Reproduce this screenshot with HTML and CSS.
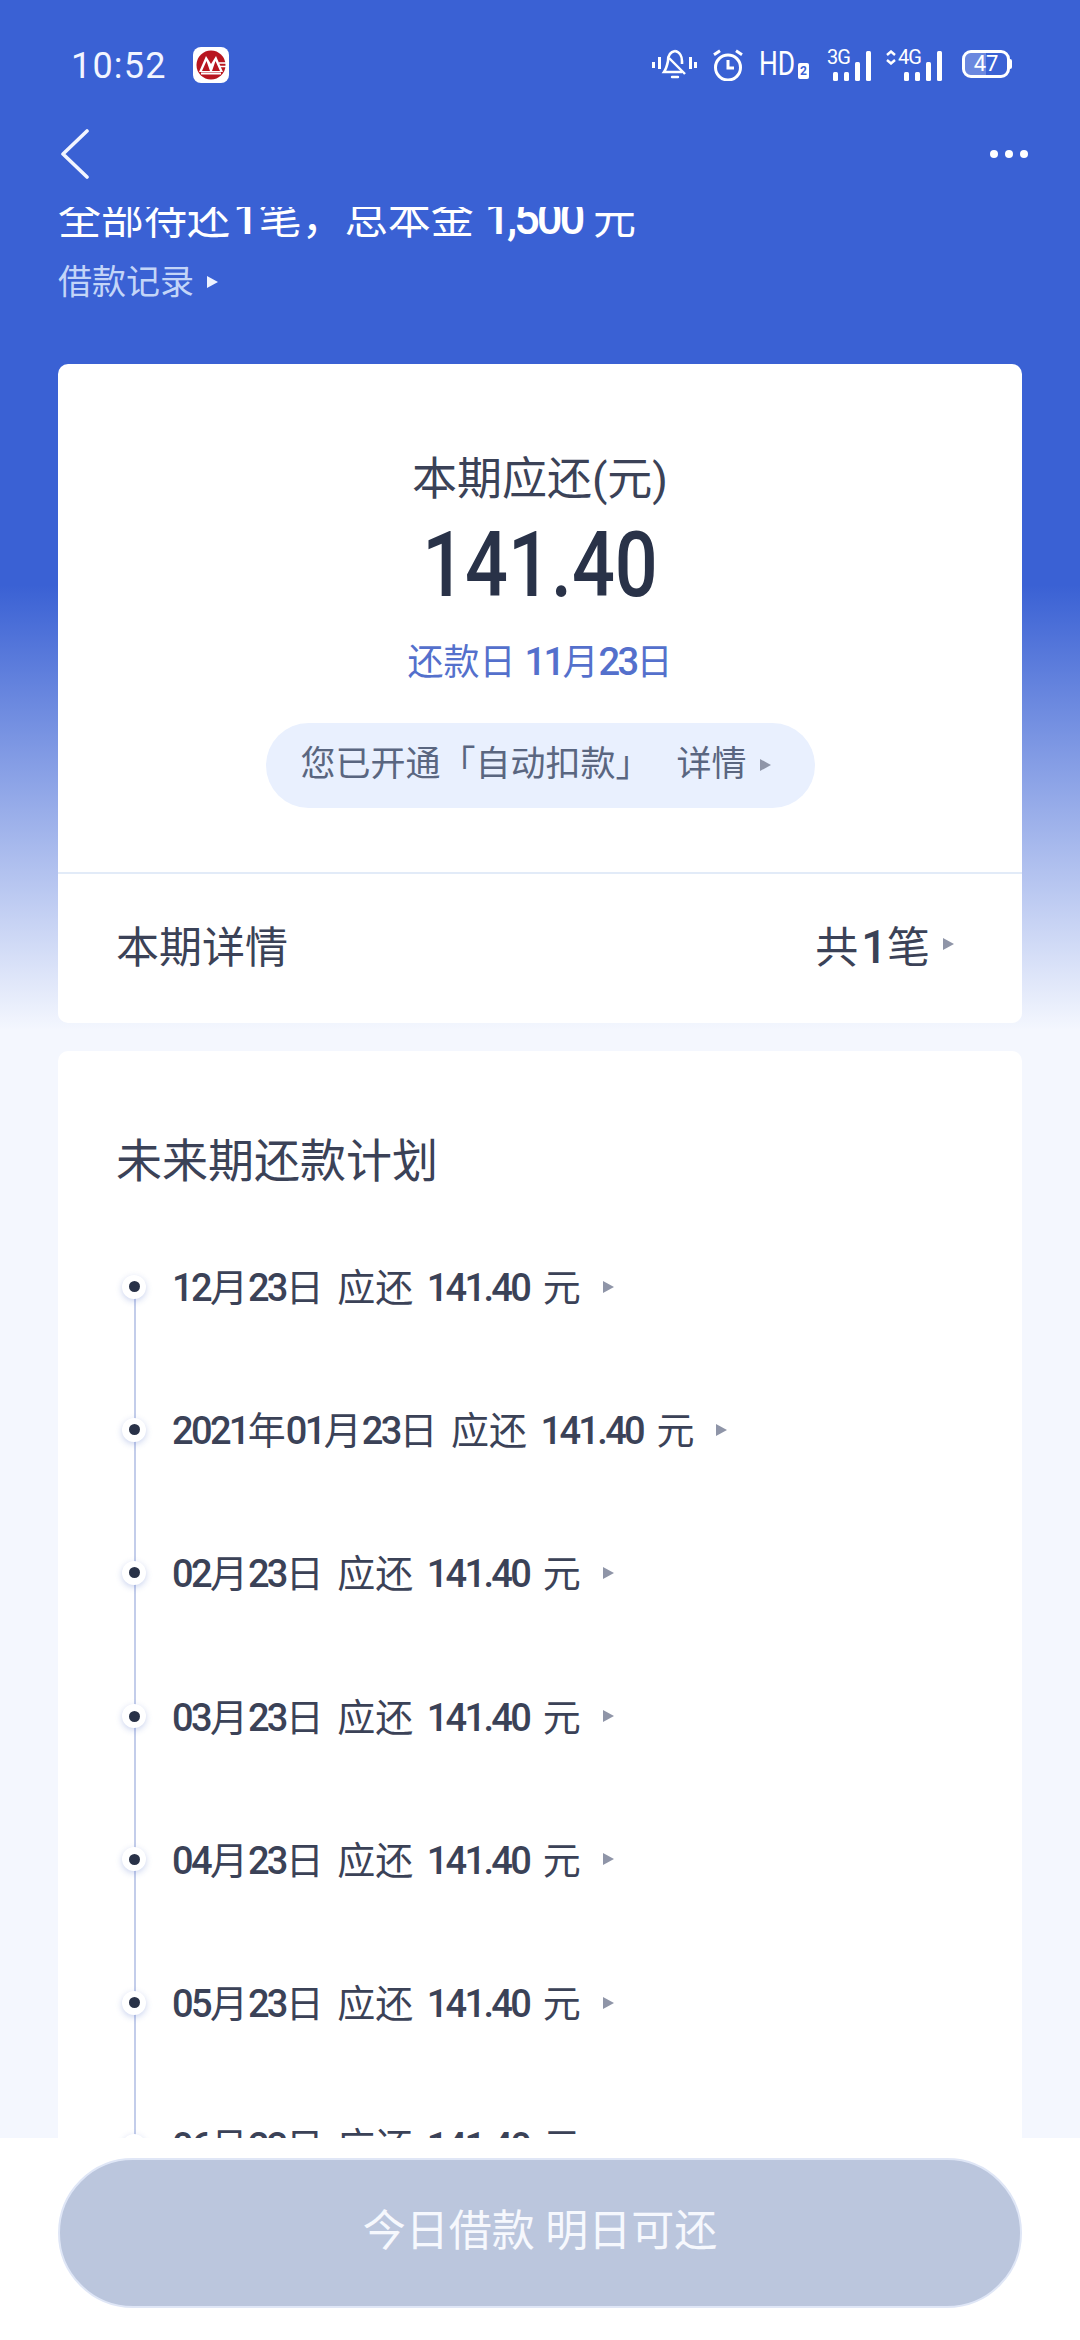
FILE: index.html
```html
<!DOCTYPE html>
<html lang="zh-CN">
<head>
  <meta charset="UTF-8">
  <meta name="viewport" content="width=device-width, initial-scale=1.0">
  <title>本期应还</title>
  <link rel="stylesheet" href="styles.css">
</head>
<body>
  <div class="screen">
    <div class="status-bar">
      <div class="status-left">
        <span class="time">10:52</span>
        <svg class="bank-logo" width="36" height="36" viewBox="0 0 36 36">
          <rect width="36" height="36" rx="8" fill="#fff"/>
          <circle cx="18" cy="18" r="14.5" fill="#b8151f"/>
          <path d="M6 25 L13 9 L18 17 L23 9 L30 25 Z" fill="#fff"/>
          <path d="M9 24 L13.5 14 L17 24 Z M19 24 L22.5 14 L27 24 Z" fill="#b8151f"/>
          <path d="M26 16 H33 M27 19.5 H33" stroke="#fff" stroke-width="1.5"/>
          <path d="M8 26.5 H28" stroke="#fff" stroke-width="2"/>
        </svg>
      </div>
      <div class="status-right">
        <svg width="46" height="32" viewBox="0 0 46 32" fill="none" stroke="#fff">
          <path d="M1 13 H4 V19 H1 Z M7 8 H10 V20 H7 Z M38 8 H41 V20 H38 Z M43 13 H46 V19 H43 Z" fill="#fff" stroke="none"/>
          <path d="M24 2 C18 3 17 8 17 12 C16 17 15 20 13 23 H31 M24 2 C29 3 31 8 31 12 L31 15" stroke-width="2.600"/>
          <path d="M18 9 L34 25" stroke-width="2.400"/>
          <path d="M21 28 H27" stroke-width="2.400" stroke-linecap="round"/>
        </svg>
        <svg class="clock-icon" width="32" height="32" viewBox="0 0 32 32" fill="none" stroke="#fff" stroke-width="3">
          <circle cx="16" cy="18.500" r="12.500"/>
          <path d="M16 11 V19 H22"/>
          <path d="M2 5.700 L8 1.700 M24 1.700 L30 5.700"/>
        </svg>
        <div class="hd-mark">
          <span class="hd-text">HD</span>
          <span class="hd-badge">2</span>
        </div>
        <div class="signal">
          <span class="net-label">3G</span>
          <div class="bars">
            <i class="bar bar-low"></i><i class="bar bar-low"></i><i class="bar bar-mid"></i><i class="bar bar-full"></i>
          </div>
        </div>
        <div class="signal signal-data">
          <svg class="data-arrows" width="10" height="15" viewBox="0 0 10 15" fill="none" stroke="#fff" stroke-width="2.400">
            <path d="M1 5 L5 1.500 L9 5 M1 10 L5 13.500 L9 10"/>
          </svg>
          <span class="net-label">4G</span>
          <div class="bars">
            <i class="bar bar-low"></i><i class="bar bar-low"></i><i class="bar bar-mid"></i><i class="bar bar-full"></i>
          </div>
        </div>
        <div class="battery">
          <div class="battery-body">
            <i class="battery-fill"></i>
            <span class="battery-level">47</span>
          </div>
          <i class="battery-nub"></i>
        </div>
      </div>
    </div>

    <div class="nav-bar">
      <svg width="30" height="50" viewBox="0 0 30 50" fill="none" stroke="#f2f5ff" stroke-width="3.600" stroke-linecap="round" stroke-linejoin="round">
        <path d="M27 2 L3 25 L27 48"/>
      </svg>
      <div class="more">
        <span></span><span></span><span></span>
      </div>
    </div>

    <div class="scroll">
      <div class="summary">
        <div class="summary-title">全部待还<b class="num num-gap">1</b>笔，总本金 <b class="num">1,500</b> 元</div>
        <div class="summary-link">借款记录 <i class="arrow arrow-light"></i></div>
      </div>

      <div class="card due-card">
        <div class="due-label">本期应还(元)</div>
        <div class="due-amount">141.40</div>
        <div class="due-date">还款日 <b class="num">11</b>月<b class="num">23</b>日</div>
        <div class="auto-pay">
          <span>您已开通「自动扣款」</span>
          <span class="auto-detail">详情</span>
          <i class="arrow"></i>
        </div>
        <div class="detail-row">
          <span>本期详情</span>
          <span class="detail-count">
            <span>共<b class="num num-gap">1</b>笔</span>
            <i class="arrow"></i>
          </span>
        </div>
      </div>

      <div class="card plan-card">
        <div class="plan-title">未来期还款计划</div>
        <ul class="plan-list">
          <li class="plan-item"><i class="plan-dot"></i><span><b class="num">12</b>月<b class="num">23</b>日 应还 <b class="num">141.40</b> 元</span><i class="arrow"></i></li>
          <li class="plan-item"><i class="plan-dot"></i><span><b class="num">2021</b>年<b class="num">01</b>月<b class="num">23</b>日 应还 <b class="num">141.40</b> 元</span><i class="arrow"></i></li>
          <li class="plan-item"><i class="plan-dot"></i><span><b class="num">02</b>月<b class="num">23</b>日 应还 <b class="num">141.40</b> 元</span><i class="arrow"></i></li>
          <li class="plan-item"><i class="plan-dot"></i><span><b class="num">03</b>月<b class="num">23</b>日 应还 <b class="num">141.40</b> 元</span><i class="arrow"></i></li>
          <li class="plan-item"><i class="plan-dot"></i><span><b class="num">04</b>月<b class="num">23</b>日 应还 <b class="num">141.40</b> 元</span><i class="arrow"></i></li>
          <li class="plan-item"><i class="plan-dot"></i><span><b class="num">05</b>月<b class="num">23</b>日 应还 <b class="num">141.40</b> 元</span><i class="arrow"></i></li>
          <li class="plan-item"><i class="plan-dot"></i><span><b class="num">06</b>月<b class="num">23</b>日 应还 <b class="num">141.40</b> 元</span><i class="arrow"></i></li>
        </ul>
      </div>
    </div>

    <div class="footer">
      <button class="borrow-button"><span>今日借款 明日可还</span></button>
    </div>
  </div>
</body>
</html>
```

FILE: styles.css
```css
* {
  box-sizing: border-box;
}
body {
  margin: 0;
  font-family: Roboto, "Noto Sans CJK SC", sans-serif;
  color: #3b4257;
}
.screen {
  display: flex;
  flex-direction: column;
  width: 1080px;
  height: 2340px;
  overflow: hidden;
  background: linear-gradient(#3a61d4 0, #3a61d4 585px, #f4f7fe 1030px);
}
.num {
  font-size: 1.06em;
  font-weight: 500;
  line-height: 1;
  letter-spacing: -0.07em;
}
.num-gap {
  margin: 0 3px;
}

/* status bar */
.status-bar {
  display: flex;
  justify-content: space-between;
  align-items: center;
  flex: none;
  height: 120px;
  padding: 12px 68px 0 71px;
  color: #fff;
}
.status-left {
  display: flex;
  align-items: center;
  gap: 26px;
}
.time {
  font-size: 36px;
  letter-spacing: 1.200px;
  color: #f2f5ff;
}
.bank-logo {
  margin-top: -2px;
}
.status-right {
  display: flex;
  align-items: flex-start;
  height: 32px;
  margin-top: -2px;
}
.clock-icon {
  margin-left: 15px;
}
.hd-mark {
  display: flex;
  align-items: flex-end;
  margin-left: 15px;
  height: 30px;
}
.hd-text {
  display: block;
  width: 36px;
  font-size: 33px;
  line-height: 30px;
  transform: scaleX(0.8);
  transform-origin: left;
}
.hd-badge {
  width: 11px;
  height: 16px;
  margin-left: 3px;
  background: #fff;
  border-radius: 2px;
  color: #3a61d4;
  font-size: 12px;
  font-weight: 700;
  line-height: 17px;
  text-align: center;
}
.signal {
  position: relative;
  width: 44px;
  height: 32px;
  margin-left: 18px;
}
.signal-data {
  width: 56px;
  margin-left: 15px;
}
.net-label {
  position: absolute;
  top: -1px;
  left: 0;
  font-size: 20px;
  line-height: 18px;
  letter-spacing: -1px;
}
.signal-data .net-label {
  left: 12px;
}
.data-arrows {
  position: absolute;
  top: 1px;
  left: 0;
}
.bars {
  position: absolute;
  right: 0;
  bottom: 0;
  display: flex;
  align-items: flex-end;
  gap: 6px;
}
.bar {
  display: block;
  width: 5px;
  background: #fff;
  border-radius: 1.5px;
}
.bar-low {
  height: 9px;
}
.bar-mid {
  height: 19px;
}
.bar-full {
  height: 30px;
}
.battery {
  display: flex;
  align-items: center;
  height: 30px;
  margin-left: 20px;
}
.battery-body {
  position: relative;
  width: 48px;
  height: 28px;
  overflow: hidden;
  border: 3px solid #fff;
  border-radius: 9px;
}
.battery-fill {
  display: block;
  width: 21px;
  height: 100%;
  background: rgba(255, 255, 255, 0.25);
}
.battery-level {
  position: absolute;
  top: 0;
  left: 0;
  width: 100%;
  font-size: 22px;
  line-height: 22px;
  text-align: center;
}
.battery-nub {
  width: 2px;
  height: 10px;
  background: #fff;
  border-radius: 0 2px 2px 0;
}

/* nav */
.nav-bar {
  display: flex;
  justify-content: space-between;
  align-items: center;
  flex: none;
  height: 87px;
  padding: 0 52px 20px 60px;
}
.more {
  display: flex;
  gap: 7px;
}
.more span {
  width: 8px;
  height: 8px;
  background: #fff;
  border-radius: 50%;
}

/* content */
.scroll {
  flex: 1;
  min-height: 0;
  overflow: hidden;
  padding: 0 58px;
}
.summary {
  margin-top: -13px;
}
.summary-title {
  font-size: 43px;
  line-height: 50px;
  color: #fff;
  white-space: nowrap;
}
.summary-link {
  display: flex;
  align-items: center;
  gap: 13px;
  margin-top: 13px;
  font-size: 34px;
  line-height: 50px;
  color: #c3d5f8;
}
.arrow {
  display: inline-block;
  flex: none;
  width: 0;
  height: 0;
  border-left: 11px solid #8f95a8;
  border-top: 6px solid transparent;
  border-bottom: 6px solid transparent;
}
.arrow-light {
  border-left-color: #eef3ff;
}
.card {
  background: #fff;
  border-radius: 10px;
}
.due-card {
  display: flex;
  flex-direction: column;
  align-items: center;
  margin-top: 57px;
  padding-top: 86px;
}
.due-label {
  font-size: 45px;
  line-height: 60px;
}
.due-amount {
  margin-top: 5px;
  margin-bottom: -1px;
  font-size: 91px;
  font-weight: 500;
  line-height: 100px;
  color: #293248;
  transform: scaleX(0.83);
}
.due-date {
  margin-top: 24px;
  font-size: 36px;
  line-height: 50px;
  color: #5470cc;
}
.auto-pay {
  display: flex;
  align-items: center;
  width: 549px;
  height: 85px;
  margin-top: 35px;
  padding: 0 0 10px 35px;
  background: #e9f0fe;
  border-radius: 43px;
  font-size: 35px;
  color: #5a6680;
}
.auto-pay .arrow {
  margin-top: 8px;
}
.auto-detail {
  margin-left: 26px;
  margin-right: 13px;
}
.detail-row {
  display: flex;
  justify-content: space-between;
  align-items: center;
  align-self: stretch;
  height: 151px;
  margin-top: 64px;
  padding: 0 68px 10px 58px;
  border-top: 2px solid #e2ebf8;
  font-size: 43px;
}
.detail-count {
  display: flex;
  align-items: center;
  gap: 13px;
}
.plan-card {
  margin-top: 28px;
  padding: 78px 58px 40px;
}
.plan-title {
  font-size: 46px;
  line-height: 64px;
}
.plan-list {
  position: relative;
  margin: 22px 0 0;
  padding: 0;
  list-style: none;
}
.plan-list::before {
  content: "";
  position: absolute;
  top: 72px;
  bottom: 0;
  left: 18px;
  width: 2px;
  background: #c3cdea;
}
.plan-item {
  position: relative;
  display: flex;
  align-items: center;
  height: 143.2px;
  font-size: 38px;
  word-spacing: 4px;
  white-space: nowrap;
}
.plan-item > span {
  margin-top: -4px;
}
.plan-item .num {
  font-size: 1em;
}
.plan-dot {
  flex: none;
  width: 24px;
  height: 24px;
  margin-left: 6px;
  margin-right: 26px;
  background: #fff;
  border-radius: 50%;
  box-shadow: 0 2px 6px rgba(80, 110, 200, 0.3);
}
.plan-dot::after {
  content: "";
  display: block;
  width: 11px;
  height: 11px;
  margin: 6.500px;
  background: #293248;
  border-radius: 50%;
}
.plan-item .arrow {
  margin-left: 22px;
}

/* footer */
.footer {
  flex: none;
  height: 202px;
  padding: 20px 58px 0;
  background: #fff;
}
.borrow-button {
  display: block;
  width: 100%;
  height: 150px;
  padding-bottom: 14px;
  background: #bbc6dd;
  border: 2px solid #dfe6f6;
  border-radius: 75px;
  font-family: inherit;
  font-size: 43px;
  color: #f6f8fd;
}
```
